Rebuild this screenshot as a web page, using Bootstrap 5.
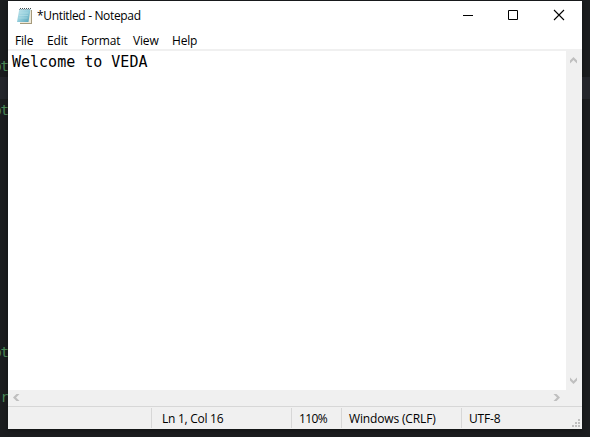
<!DOCTYPE html>
<html lang="en">
<head>
<meta charset="utf-8">
<title>*Untitled - Notepad</title>
<link href="https://cdn.jsdelivr.net/npm/bootstrap@5.3.0/dist/css/bootstrap.min.css" rel="stylesheet">
<style>
html,body{height:437px;margin:0;overflow:hidden}
body{background:#1b1d1f;font:12px/16px "Open Sans","Noto Sans",sans-serif;color:#000}
.desk{width:590px;height:437px;padding:1px 0 8px 0}
.gutter{width:8px;font:14px/18px "DejaVu Sans Mono",monospace;color:#4b8a58}
.gutter div{display:flex;justify-content:flex-end;white-space:nowrap;height:18px;letter-spacing:-1px}
.gutter .g1{margin-top:56px}.gutter .g2{margin-top:2px}.gutter .g3{margin-top:224px}.gutter .g4{margin-top:27px}
.gutter .band{margin-top:2px;background:#24262b;height:22px}
.strip{width:8px}
.strip div{background:#24262b;height:22px;margin-top:76px}
.win{width:574px;height:428px;background:#fff;box-shadow:0 1px 5px #0006}
.titlebar{height:30px;padding-left:8px}
.titlebar .caption{margin-left:4px;letter-spacing:-.34px}
.ctl{width:46px;height:30px}
.menu{height:18px;padding-left:7px;line-height:18px;padding-top:1px;letter-spacing:-.18px}
.rule{height:2px;background:#f0f0f0}
.menu span{white-space:nowrap}
.m1{width:32px}.m2{width:34px}.m3{width:52px}.m4{width:39px}
.doc{height:339px}
.editor{font:15px/20px "DejaVu Sans Mono",monospace;padding:1px 0 0 4px}
.vbar{width:16px;background:#f0f0f0;padding:4px 0 4px}
.hbar{height:16px;background:#f0f0f0;padding:0 21px 0 3px}
.status{height:23px;background:#f0f0f0;border-top:1px solid #d7d7d7;line-height:22px;padding-top:1px;letter-spacing:-.15px}
.cell{height:20px;border-left:1px solid #d7d7d7;white-space:nowrap}
.c0{width:143px}.c1{width:140px;padding-left:10px}.c2{width:50px;padding-left:7px}.c3{width:120px;padding-left:7px}.c4{width:102px;padding-left:7px}
.c1{letter-spacing:-.27px}.c2{letter-spacing:-.6px}
svg{display:block;flex:none}
</style>
<script src="https://cdn.jsdelivr.net/npm/bootstrap@5.3.0/dist/js/bootstrap.bundle.min.js"></script>
</head>
<body>
<div class="desk d-flex">
  <div class="gutter overflow-hidden flex-shrink-0">
    <div class="g1">ot</div><div class="band"></div><div class="g2">ot</div><div class="g3">ot</div><div class="g4">r</div>
  </div>
  <div class="win d-flex flex-column flex-shrink-0">
    <div class="titlebar d-flex align-items-center">
      <svg width="17" height="18" viewBox="0 0 17 18">
        <defs><linearGradient id="pg" x1="0" y1="0" x2="1" y2="1"><stop offset="0" stop-color="#c3e6ed"/><stop offset=".5" stop-color="#93cddb"/><stop offset="1" stop-color="#4f9fb5"/></linearGradient></defs>
        <path d="M4 3h12v14H4z" fill="#a59a7b"/><path d="M4 3h11v13H4z" fill="#eee9da"/>
        <path d="M3.300 2h11.200L12.500 15H1z" fill="url(#pg)"/>
        <path d="M3.500 6h9M3 8.500h9M2.500 11h9" stroke="#bee4eb" stroke-width=".5"/>
        <path d="M4 1.500h11" stroke="#434b50" stroke-dasharray="1 1"/><path d="M3 2.500h12" stroke="#8b9da3" stroke-dasharray="1 1"/>
      </svg>
      <span class="caption">*Untitled - Notepad</span>
      <div class="d-flex ms-auto">
        <svg class="ctl" viewBox="0 0 46 30"><path d="M19 14.500h10" stroke="#000"/></svg>
        <svg class="ctl" viewBox="0 0 46 30"><path d="M18.500 9.500h9v9h-9z" fill="none" stroke="#000"/></svg>
        <svg class="ctl" viewBox="0 0 46 30"><path d="M18 9l10 10M28 9L18 19" stroke="#000" stroke-width="1.100"/></svg>
      </div>
    </div>
    <div class="menu d-flex"><span class="m1">File</span><span class="m2">Edit</span><span class="m3">Format</span><span class="m4">View</span><span>Help</span></div>
    <div class="rule"></div>
    <div class="doc d-flex">
      <div class="editor flex-grow-1">Welcome to VEDA</div>
      <div class="vbar d-flex flex-column justify-content-between">
        <svg width="16" height="10" viewBox="0 0 16 10"><path d="M7.500 2L11 5.500V8.500L7.500 5L4 8.500V5.500z" fill="#bfbfbf"/></svg>
        <svg width="16" height="10" viewBox="0 0 16 10"><path d="M7.500 8L11 4.500V1.500L7.500 5L4 1.500V4.500z" fill="#bfbfbf"/></svg>
      </div>
    </div>
    <div class="hbar d-flex justify-content-between">
      <svg width="10" height="16" viewBox="0 0 10 16"><path d="M2 7.500L5.500 4H8.500L5 7.500L8.500 11H5.500z" fill="#bfbfbf"/></svg>
      <svg width="10" height="16" viewBox="0 0 10 16"><path d="M9 7.500L5.500 4H2.500L6 7.500L2.500 11H5.500z" fill="#bfbfbf"/></svg>
    </div>
    <div class="status d-flex">
      <div class="c0"></div><div class="cell c1">Ln 1, Col 16</div><div class="cell c2">110%</div><div class="cell c3">Windows (CRLF)</div><div class="cell c4">UTF-8</div>
      <svg class="ms-auto" width="12" height="21" viewBox="0 0 12 21"><path d="M8 11h2v2H8zM8 14h2v2H8zM8 17h2v2H8zM5 14h2v2H5zM5 17h2v2H5zM2 17h2v2H2z" fill="#bfbfbf"/></svg>
    </div>
  </div>
  <div class="strip"><div></div></div>
</div>
</body>
</html>
